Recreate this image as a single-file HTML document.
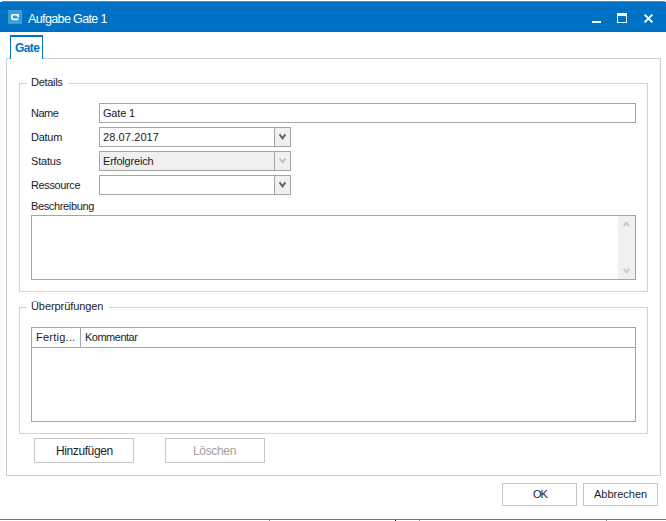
<!DOCTYPE html>
<html><head><meta charset="utf-8">
<style>
*{box-sizing:border-box;margin:0;padding:0}
html,body{width:666px;height:521px;overflow:hidden;background:#fff}
body{position:relative;font-family:"Liberation Sans",sans-serif;font-size:11px;color:#1c1c1c}
.a{position:absolute}
.t{position:absolute;white-space:nowrap;line-height:11px;font-size:11px}
.box{position:absolute;border:1px solid #a5a5a5;background:#fff}
.gb{position:absolute;border:1px solid #d3d3d3}
.btn{position:absolute;border:1px solid #c6c6c6;background:#fff}
.dd{position:absolute;top:0;right:0;width:16px;height:18px;border-left:1px solid #a5a5a5;background:#f0f0f0}
</style></head><body>
<!-- title bar -->
<div class="a" style="left:0;top:1px;width:666px;height:31px;background:#0072c6"></div>
<div class="a" style="left:0;top:31px;width:666px;height:1px;background:#006bbd"></div>
<div class="a" style="left:0;top:1px;width:666px;height:1px;background:#4f86c2"></div>
<div class="a" style="left:0;top:1px;width:2px;height:1px;background:#fff"></div>
<div class="a" style="left:665px;top:1px;width:1px;height:1px;background:#fff"></div>
<div class="a" style="left:8px;top:10px;width:14px;height:14px;background:#3c9cd4"></div>
<svg class="a" style="left:0;top:0" width="30" height="30"><path d="M18.15 17.2V15.3Q18.15 14.75 17.6 14.75H13.4Q11.7 14.75 11.7 17.05Q11.7 19.35 13.4 19.35H18.2" fill="none" stroke="#fff" stroke-width="1.7"/></svg>
<div class="t" id="tt" style="left:28px;top:13px;color:#fff;font-size:12.5px;line-height:12px;letter-spacing:-0.62px">Aufgabe Gate 1</div>
<!-- window buttons -->
<div class="a" style="left:592px;top:21px;width:9px;height:2px;background:#fff"></div>
<div class="a" style="left:617px;top:13px;width:10px;height:10px;border:1px solid #fff;border-top-width:3px"></div>
<svg class="a" style="left:643px;top:13px" width="11" height="11"><path d="M1.6 1.6L9.4 9.4M9.4 1.6L1.6 9.4" stroke="#fff" stroke-width="1.9"/></svg>

<!-- tab page -->
<div class="a" style="left:6px;top:58px;width:655px;height:418px;border:1px solid #cdcdcd"></div>
<div class="a" style="left:10px;top:35px;width:33px;height:24px;border:1px solid #0072c6;border-top-width:2px;border-bottom:none;background:#fff"></div>
<div class="t" id="tg" style="left:15px;top:43px;color:#0072c6;font-weight:bold;font-size:12px;letter-spacing:-0.6px">Gate</div>

<!-- Details group -->
<div class="gb" style="left:19px;top:83px;width:629px;height:209px"></div>
<div class="a" style="left:27px;top:80px;width:41px;height:6px;background:#fff"></div>
<div class="t" id="t_det" style="left:31px;top:77px;letter-spacing:-0.3px">Details</div>

<div class="t" style="left:31px;top:108px;letter-spacing:-0.5px">Name</div>
<div class="box" style="left:99px;top:103px;width:537px;height:20px"></div>
<div class="t" style="left:103px;top:108px;letter-spacing:-0.2px">Gate 1</div>

<div class="t" style="left:31px;top:132px;letter-spacing:-0.25px">Datum</div>
<div class="box" style="left:99px;top:127px;width:192px;height:20px"><div class="dd"></div></div>
<div class="t" style="left:103px;top:132px;letter-spacing:0.1px">28.07.2017</div>

<div class="t" style="left:31px;top:156px;letter-spacing:-0.2px">Status</div>
<div class="box" style="left:99px;top:151px;width:192px;height:20px;background:#f0f0f0"><div class="dd"></div></div>
<div class="t" style="left:103px;top:156px;letter-spacing:-0.2px">Erfolgreich</div>

<div class="t" style="left:31px;top:180px;letter-spacing:-0.375px">Ressource</div>
<div class="box" style="left:99px;top:175px;width:192px;height:20px"><div class="dd"></div></div>

<svg class="a" style="left:0;top:0" width="300" height="200"><path d="M279.6 134.4L282.5 138.4L285.4 134.4" fill="none" stroke="#606060" stroke-width="1.9"/><path d="M279.6 158.4L282.5 162.4L285.4 158.4" fill="none" stroke="#c0c0c0" stroke-width="1.9"/><path d="M279.6 182.4L282.5 186.4L285.4 182.4" fill="none" stroke="#606060" stroke-width="1.9"/></svg>

<div class="t" style="left:31px;top:201px;letter-spacing:-0.36px">Beschreibung</div>
<div class="box" style="left:31px;top:215px;width:605px;height:65px"></div>
<div class="a" style="left:618px;top:216px;width:17px;height:63px;background:#f0f0f0"></div>
<svg class="a" style="left:0;top:0" width="666" height="300"><path d="M623.6 226.4L626.5 222.6L629.4 226.4" fill="none" stroke="#c8c8c8" stroke-width="1.8"/><path d="M623.6 268.6L626.5 272.4L629.4 268.6" fill="none" stroke="#c8c8c8" stroke-width="1.8"/></svg>

<!-- Überprüfungen group -->
<div class="gb" style="left:19px;top:307px;width:629px;height:127px"></div>
<div class="a" style="left:27px;top:304px;width:82px;height:6px;background:#fff"></div>
<div class="t" style="left:31px;top:301px;letter-spacing:-0.08px">Überprüfungen</div>
<div class="box" style="left:31px;top:327px;width:605px;height:95px"></div>
<div class="a" style="left:32px;top:347px;width:603px;height:1px;background:#a5a5a5"></div>
<div class="a" style="left:80px;top:328px;width:1px;height:19px;background:#a5a5a5"></div>
<div class="t" style="left:36px;top:332px;letter-spacing:0.25px">Fertig...</div>
<div class="t" style="left:85px;top:332px;letter-spacing:-0.5px">Kommentar</div>

<div class="btn" style="left:34px;top:438px;width:100px;height:25px"></div>
<div class="t" style="left:56px;top:445px;font-size:12px;line-height:12px;letter-spacing:-0.4px">Hinzufügen</div>
<div class="btn" style="left:165px;top:438px;width:100px;height:25px;border-color:#c6c6c6"></div>
<div class="t" style="left:193px;top:445px;font-size:12px;line-height:12px;color:#a0a0a0;letter-spacing:-0.33px">Löschen</div>
<div class="btn" style="left:502px;top:483px;width:75px;height:23px"></div>
<div class="t" style="left:533px;top:489px;letter-spacing:-1px">OK</div>
<div class="btn" style="left:583px;top:483px;width:75px;height:23px"></div>
<div class="t" style="left:594px;top:489px">Abbrechen</div>
<div class="a" style="left:0;top:519px;width:666px;height:1px;background:#4a80bc"></div>
<div class="a" style="left:269px;top:520px;width:1px;height:1px;background:#8a8a8a"></div>
<div class="a" style="left:395px;top:520px;width:1px;height:1px;background:#111"></div>
<div class="a" style="left:419px;top:520px;width:1px;height:1px;background:#9a9a9a"></div>
<div class="a" style="left:606px;top:520px;width:1px;height:1px;background:#8a8a8a"></div>
</body></html>
